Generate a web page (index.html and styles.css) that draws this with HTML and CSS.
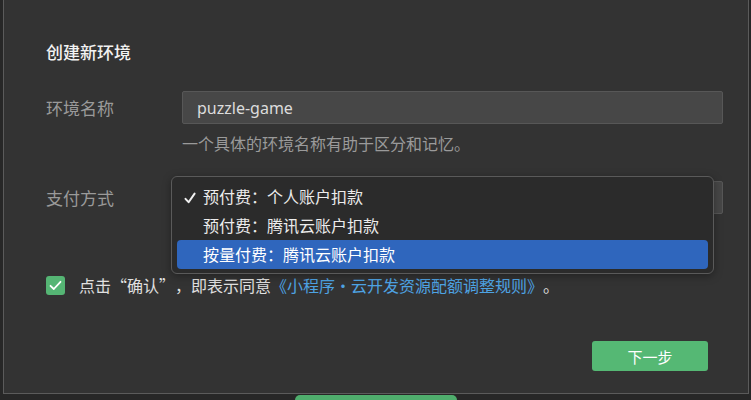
FILE: index.html
```html
<!DOCTYPE html>
<html lang="zh-CN">
<head>
  <meta charset="UTF-8">
  <meta name="viewport" content="width=device-width, initial-scale=1.0">
  <title>创建新环境</title>
  <link rel="stylesheet" href="styles.css">
</head>
<body>
<div class="dialog">
  <div class="dialog-body">
    <h1 class="title">创建新环境</h1>

    <div class="form-row">
      <label class="label" for="envName">环境名称</label>
      <div class="field">
        <input class="text-input" id="envName" type="text" value="puzzle-game">
      </div>
    </div>
    <p class="help">一个具体的环境名称有助于区分和记忆。</p>

    <div class="form-row pay-row">
      <span class="label">支付方式</span>
      <div class="field">
        <div class="select"></div>
        <ul class="menu">
          <li class="menu-item">
            <svg class="tick" width="12" height="12" viewBox="0 0 12 12"><path d="M1.5 6.8 L4.6 10.2 L10.6 1.6" fill="none" stroke="#f0f0f0" stroke-width="2" stroke-linecap="round" stroke-linejoin="round"/></svg>
            预付费：个人账户扣款
          </li>
          <li class="menu-item">预付费：腾讯云账户扣款</li>
          <li class="menu-item active">按量付费：腾讯云账户扣款</li>
        </ul>
      </div>
    </div>

    <div class="agree">
      <span class="checkbox">
        <svg width="13" height="11" viewBox="0 0 13 11"><path d="M1.5 5.8 L4.8 9 L11.5 1.8" fill="none" stroke="#fff" stroke-width="1.8" stroke-linecap="round" stroke-linejoin="round"/></svg>
      </span>
      <span class="agree-text">点击“确认”，即表示同意<a class="link" href="#">《小程序·云开发资源配额调整规则》</a>。</span>
    </div>
  </div>

  <div class="footer">
    <button class="btn-next">下一步</button>
  </div>
</div>
<div class="under-btn"></div>
</body>
</html>
```

FILE: styles.css
```css
html, body {
  margin: 0;
  padding: 0;
}
body {
  background-color: #272727;
  font-family: "Noto Sans CJK SC", "Noto Sans", sans-serif;
  color: #e6e6e6;
  width: 751px;
  height: 400px;
  overflow: hidden;
  text-spacing-trim: space-all;
}
.dialog {
  margin-left: 3px;
  width: 744px;
  height: 393px;
  background-color: #333333;
  border: 1px solid #5b5b5b;
  border-top: none;
  box-sizing: content-box;
}
.dialog-body {
  padding: 41px 25px 0 42px;
}
.title {
  margin: 0;
  font-size: 17px;
  line-height: 22px;
  font-weight: 500;
  color: #f2f2f2;
}
.form-row {
  display: flex;
  align-items: center;
  margin-top: 28px;
}
.label {
  width: 136px;
  flex: none;
  font-size: 17px;
  color: #9a9a9a;
}
.field {
  flex: 1;
  position: relative;
}
.text-input {
  display: block;
  width: 100%;
  height: 33px;
  box-sizing: border-box;
  background-color: #474747;
  border: 1px solid #575757;
  border-radius: 2px;
  padding: 0 14px;
  font-family: "Noto Sans", "Noto Sans CJK SC", sans-serif;
  font-size: 16px;
  color: #dcdcdc;
  outline: none;
}
.help {
  margin: 9px 0 0 136px;
  font-size: 16px;
  line-height: 20px;
  color: #9a9a9a;
}
.select {
  height: 33px;
  box-sizing: border-box;
  background-color: #474747;
  border: 1px solid #575757;
  border-radius: 2px;
}
.menu {
  position: absolute;
  left: -11px;
  top: -5px;
  width: 543px;
  box-sizing: border-box;
  margin: 0;
  padding: 5px 5px 4px;
  list-style: none;
  background-color: #2b2b2b;
  border: 1px solid #5a5a5a;
  border-radius: 6px;
  box-shadow: 0 2px 8px rgba(0, 0, 0, 0.35);
}
.menu-item {
  position: relative;
  height: 29px;
  line-height: 29px;
  padding-left: 26px;
  font-size: 16px;
  color: #ececec;
  border-radius: 4px;
}
.tick {
  position: absolute;
  left: 7px;
  top: 10px;
}
.menu-item.active {
  background-color: #2f66bd;
  color: #fff;
}
.agree {
  display: flex;
  align-items: center;
  margin-top: 59px;
}
.checkbox {
  width: 19px;
  height: 19px;
  border-radius: 3px;
  background-color: #55b574;
  display: flex;
  align-items: center;
  justify-content: center;
  flex: none;
}
.agree-text {
  margin-left: 14px;
  font-size: 16px;
  color: #e0e0e0;
}
.link {
  color: #4ea3e3;
  text-decoration: none;
}
.footer {
  display: flex;
  justify-content: flex-end;
  padding-right: 40px;
  margin-top: 44px;
}
.btn-next {
  width: 116px;
  height: 30px;
  border: none;
  border-radius: 3px;
  background-color: #55b874;
  color: #fff;
  font-family: "Noto Sans CJK SC", sans-serif;
  font-size: 15px;
  cursor: pointer;
}
.under-btn {
  margin: 1px 0 0 295px;
  width: 162px;
  height: 10px;
  background-color: #4fae6d;
  border-radius: 5px 5px 0 0;
}
```
